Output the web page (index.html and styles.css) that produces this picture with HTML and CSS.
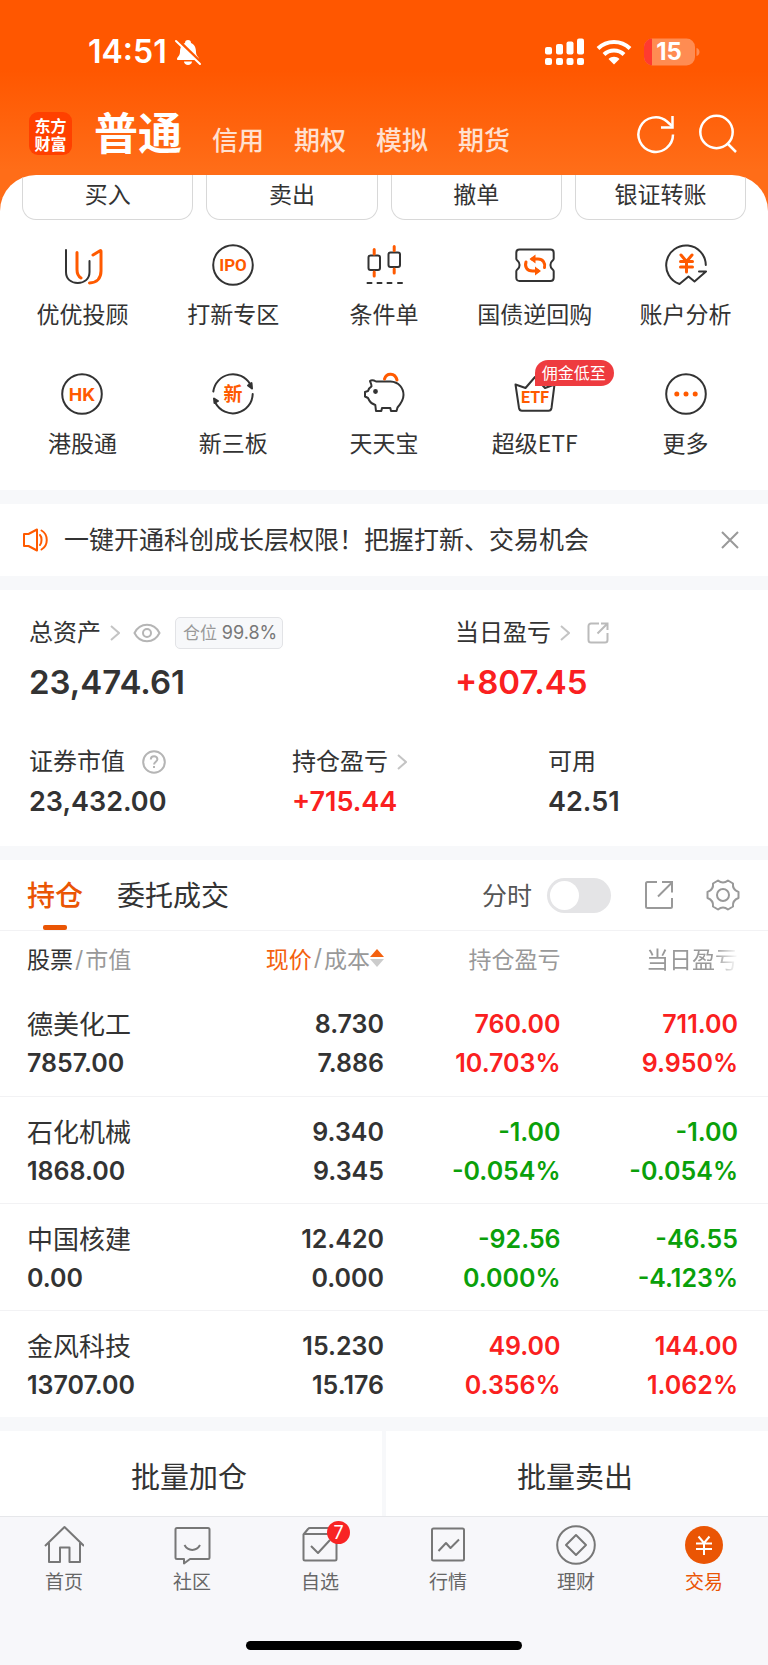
FILE: index.html
```html
<!DOCTYPE html>
<html lang="zh-CN">
<head>
<meta charset="utf-8">
<meta name="viewport" content="width=device-width, initial-scale=1">
<title>交易</title>
<link rel="stylesheet" href="styles.css">
</head>
<body>
<div class="app">
  <div class="top">
    <div class="status">
      <div class="status-group">
        <span class="clock">14:51</span>
        <svg class="bell" width="28" height="28" viewBox="0 0 28 28" aria-hidden="true">
          <path d="M3 21c0-2 3-3 3-7 0-5 2-8 5-9 0-2 1-3 3-3s3 1 3 3c3 1 5 4 5 9 0 4 3 5 3 7 0 .8-.6 1-1 1H4c-.6 0-1-.3-1-1z" fill="#fff"/>
          <path d="M10 23.500h8c0 2-2 3.500-4 3.500s-4-1.500-4-3.500z" fill="#fff"/>
          <path d="M3.500 1.500l24 23.500" stroke="#ff5800" stroke-width="3"/>
          <path d="M2 3l24 23" stroke="#fff" stroke-width="2" stroke-linecap="round"/>
        </svg>
      </div>
      <div class="status-group status-right">
        <svg width="39" height="28" viewBox="0 0 39 28" fill="#fff" aria-hidden="true">
          <rect x="0" y="9" width="7" height="7.500" rx="2"/><rect x="11" y="6" width="7" height="10.500" rx="2"/><rect x="21.500" y="3.500" width="7" height="13" rx="2"/><rect x="32" y="0.500" width="7" height="16" rx="2"/>
          <rect x="0" y="20" width="7" height="7" rx="2"/><rect x="11" y="20" width="7" height="7" rx="2"/><rect x="21.500" y="20" width="7" height="7" rx="2"/><rect x="32" y="20" width="7" height="7" rx="2"/>
        </svg>
        <svg class="wifi" width="36" height="26" viewBox="0 0 36 26" fill="none" stroke="#fff" stroke-width="4" aria-hidden="true">
          <path d="M2 9.500C11 0.800 25 0.800 34 9.500"/><path d="M8 15.500c5.500-5.400 14.500-5.400 20 0"/>
          <path d="M12.500 20c3-3 8-3 11 0L18 25.500z" fill="#fff" stroke="none"/>
        </svg>
        <svg width="57" height="28" viewBox="0 0 57 28" aria-hidden="true">
          <defs><clipPath id="cell"><rect x="0" y="0.500" width="51" height="27" rx="8.500"/></clipPath></defs>
          <g clip-path="url(#cell)"><rect width="51" height="28" fill="#ff8c52"/><rect width="8" height="28" fill="#ff3b30"/></g>
          <path d="M52.500 10c4 1 4 7 0 8z" fill="#ff8c52"/>
          <text x="25" y="22" class="battery-text">15</text>
        </svg>
      </div>
    </div>
    <header class="bar">
      <div class="logo"><span>东方</span><span>财富</span></div>
      <nav class="accounts">
        <button class="account account-on">普通</button>
        <button class="account">信用</button>
        <button class="account">期权</button>
        <button class="account">模拟</button>
        <button class="account">期货</button>
      </nav>
      <div class="bar-tools">
        <button class="icon-btn" aria-label="刷新"><svg width="40" height="40" viewBox="0 0 40 40" fill="none" stroke="#fff" stroke-width="2.500"><path d="M37 20.500A17.300 17.300 0 1 1 31 7.500L36 12"/><path d="M36.500 2v11.500H25"/></svg></button>
        <button class="icon-btn" aria-label="搜索"><svg width="40" height="40" viewBox="0 0 40 40" fill="none" stroke="#fff" stroke-width="2.500"><circle cx="18.500" cy="18" r="16.200"/><path d="M29.500 29.500l8.500 8.500"/></svg></button>
      </div>
    </header>
    <section class="sheet">
      <div class="actions">
        <button class="action">买入</button><button class="action">卖出</button><button class="action">撤单</button><button class="action">银证转账</button>
      </div>
      <div class="grid">
        <a class="tile" href="#"><svg class="tile-icon" viewBox="0 0 44 44"><path d="M6 7v22c0 7 5 11 11.700 11s11.800-4 11.800-11V18"/><path class="hot" d="M17 9.500v17c0 4 1.500 7 4 8.500M33 12l7-4.200c.7-.4 1 0 1 .7V28c0 7-4 11.800-11.500 12"/></svg><span>优优投顾</span></a>
        <a class="tile" href="#"><svg class="tile-icon" viewBox="0 0 44 44"><circle cx="22" cy="22" r="19.800"/><text x="22" y="28" class="glyph g-ipo">IPO</text></svg><span>打新专区</span></a>
        <a class="tile" href="#"><svg class="tile-icon" viewBox="0 0 44 44"><rect x="6.500" y="12.500" width="11.500" height="14.500" rx="2"/><rect x="26.500" y="9.500" width="11.500" height="14.500" rx="2"/><path class="hot" d="M12.200 6.500v4.500M12.200 29v4M32.200 3.500v4M32.200 26v4"/><path d="M5.500 40h4M15.500 40h4M25.500 40h4M36 40h4"/></svg><span>条件单</span></a>
        <a class="tile" href="#"><svg class="tile-icon" viewBox="0 0 44 44"><path d="M6.500 6.500h31c2 0 3.200 1.200 3.200 3.200v6c0 1-.5 1.300-1.300 2-2.600 2.200-2.600 6.400 0 8.600.8.700 1.300 1 1.300 2v6.500c0 2-1.200 3.200-3.200 3.200h-31c-2 0-3.200-1.200-3.200-3.200v-6.500c0-1 .5-1.300 1.300-2 2.600-2.200 2.600-6.400 0-8.600-.8-.7-1.300-1-1.300-2v-6c0-2 1.200-3.200 3.200-3.200z"/><path class="hot" d="M19 16h6c5 0 7.500 4 6.500 8.500M13 19c-1.500 5 1 9 6.500 9H25"/><path class="hot-fill" d="M16.500 16l6-4.500v9zM28 28l-6-4.500v9z"/></svg><span>国债逆回购</span></a>
        <a class="tile" href="#"><svg class="tile-icon" viewBox="0 0 44 44"><path d="M41.800 22A19.800 19.800 0 1 0 15.500 41l9-7.500 6 5 11.500-10h-7"/><path class="hot" d="M17 12l5.500 6.500L28 12M22.500 18.500V29M16.500 18.500h12M16.500 24h12"/></svg><span>账户分析</span></a>
        <a class="tile" href="#"><svg class="tile-icon" viewBox="0 0 44 44"><circle cx="22" cy="22" r="19.800"/><text x="22" y="28.500" class="glyph g-hk">HK</text></svg><span>港股通</span></a>
        <a class="tile" href="#"><svg class="tile-icon" viewBox="0 0 44 44"><path d="M2.300 19.500A19.800 19.800 0 0 1 39 12M41.700 22A19.800 19.800 0 0 1 4.500 31"/><path class="dark-fill" d="M41 16.500l-4-3 3.500-2.500zM3 26.500l.5 4.500 3.500-2z"/><text x="22" y="29" class="glyph g-new">新</text></svg><span>新三板</span></a>
        <a class="tile" href="#"><svg class="tile-icon" viewBox="0 0 44 44"><path d="M8 9c1.500-1.200 3.500-1 6 .5l14.500 0C37 10 41.500 16 41.500 23c0 5-3 9-6 12.500L34.500 39H29l-.7-3H20l-.7 3H14l-.7-6c-3-1-5-2.500-6-4.500L6 26l-3-1.500V20l3-1c.5-2 1.500-3.500 3.500-4.700C9.500 12 8.500 11 8 9z"/><circle class="dark-fill" cx="13.500" cy="19.500" r="1.400"/><path class="hot" d="M22.500 7c2-6.500 10.500-6.500 12.500 1"/></svg><span>天天宝</span></a>
        <a class="tile" href="#"><svg class="tile-icon" viewBox="0 0 44 44"><path d="M2.500 12.500l10 3.500L22 5l10 11 9.500-3.500L38.500 36c-.3 1.800-1.300 2.700-3 2.700H9c-1.800 0-2.700-1-3-2.700z"/><text x="22" y="31" class="glyph g-etf">ETF</text></svg><em class="flag">佣金低至</em><span>超级ETF</span></a>
        <a class="tile" href="#"><svg class="tile-icon" viewBox="0 0 44 44"><circle cx="22" cy="22" r="19.800"/><g class="hot-fill"><circle cx="12.800" cy="22" r="2.500"/><circle cx="22" cy="22" r="2.500"/><circle cx="31.200" cy="22" r="2.500"/></g></svg><span>更多</span></a>
      </div>
    </section>
  </div>

  <section class="notice">
    <svg width="26" height="24" viewBox="0 0 26 24" fill="none" stroke="#ff5a00" stroke-width="2" stroke-linejoin="round" aria-hidden="true"><path d="M1 6h4.500L14 1.500v21L5.500 18H1z"/><path d="M17 7c2 2 2 8 0 10M18.500 2.500c7 4 7 15 0 19" stroke-linecap="round"/></svg>
    <p class="notice-text">一键开通科创成长层权限！把握打新、交易机会</p>
    <button class="icon-btn" aria-label="关闭"><svg width="18" height="18" viewBox="0 0 18 18" stroke="#999" stroke-width="2"><path d="M1 1l16 16M17 1L1 17"/></svg></button>
  </section>

  <section class="assets">
    <div class="asset-main">
      <div>
        <div class="label">总资产
          <svg class="chev" viewBox="0 0 10 16"><path d="M1 1l8 7-8 7"/></svg>
          <button class="icon-btn eye" aria-label="隐藏金额"><svg width="28" height="20" viewBox="0 0 28 20" fill="none" stroke="#b5b5b5" stroke-width="2"><path d="M1.500 10C7-1 21-1 26.500 10 21 21 7 21 1.500 10z"/><circle cx="14" cy="10" r="4"/></svg></button>
          <span class="ratio">仓位 <b>99.8%</b></span>
        </div>
        <div class="big">23,474.61</div>
      </div>
      <div>
        <div class="label">当日盈亏
          <svg class="chev" viewBox="0 0 10 16"><path d="M1 1l8 7-8 7"/></svg>
          <button class="icon-btn share" aria-label="分享"><svg width="22" height="22" viewBox="0 0 22 22" fill="none" stroke="#bbb" stroke-width="2"><path d="M12 1.500H4A2.500 2.500 0 0 0 1.500 4v14A2.500 2.500 0 0 0 4 20.500h14a2.500 2.500 0 0 0 2.500-2.500v-7M10.500 11.500L20 2M14 1.500h6.500V8"/></svg></button>
        </div>
        <div class="big up">+807.45</div>
      </div>
    </div>
    <div class="asset-sub">
      <div>
        <div class="label">证券市值
          <svg class="help" width="24" height="24" viewBox="0 0 24 24" fill="none" stroke="#b5b5b5" stroke-width="2"><circle cx="12" cy="12" r="10.800"/><path d="M8.800 9.500c0-4.500 6.600-4.300 6.600-.2 0 2.200-3.300 2.700-3.300 5.200"/><path d="M12 16v2"/></svg>
        </div>
        <div class="mid">23,432.00</div>
      </div>
      <div>
        <div class="label">持仓盈亏
          <svg class="chev" viewBox="0 0 10 16"><path d="M1 1l8 7-8 7"/></svg>
        </div>
        <div class="mid up">+715.44</div>
      </div>
      <div>
        <div class="label">可用</div>
        <div class="mid">42.51</div>
      </div>
    </div>
  </section>

  <section class="positions">
    <div class="tabs">
      <button class="tab tab-on">持仓</button>
      <button class="tab">委托成交</button>
      <label class="switch-label" for="minute">分时</label>
      <input class="switch" type="checkbox" id="minute">
      <button class="icon-btn out" aria-label="分享持仓"><svg width="28" height="28" viewBox="0 0 28 28" fill="none" stroke="#999" stroke-width="2"><path d="M12 1H2.500C1.500 1 1 1.500 1 2.500v23c0 1 .5 1.500 1.500 1.500h23c1 0 1.500-.5 1.500-1.500V17M13 15.500L26.500 2M17 1h10v10.500"/></svg></button>
      <button class="icon-btn" aria-label="设置"><svg width="34" height="34" viewBox="0 0 34 34" fill="none" stroke="#999" stroke-width="2" stroke-linejoin="round"><circle cx="17" cy="17" r="6"/><path d="M12 2.500c3 2.500 7 2.500 10 0l5 3c-.5 4 1.500 7 5.500 8.500v6c-4 1.500-6 4.500-5.500 8.500l-5 3c-3-2.500-7-2.500-10 0l-5-3c.5-4-1.500-7-5.500-8.500v-6C5.500 12.500 7.500 9.500 7 5.500z"/></svg></button>
    </div>
    <table class="table">
      <thead>
        <tr>
          <th><b class="dark">股票</b><i>/</i>市值</th>
          <th><button class="sort"><b class="hot-text">现价</b><i>/</i>成本<svg width="14" height="20" viewBox="0 0 14 20"><path d="M7 1l7 8H0z" fill="#f4610f"/><path d="M7 19l7-8H0z" fill="#ccc"/></svg></button></th>
          <th>持仓盈亏</th>
          <th><span class="fade">当日盈亏</span></th>
        </tr>
      </thead>
      <tbody>
        <tr><td><span class="name">德美化工</span><span>7857.00</span></td><td><span>8.730</span><span>7.886</span></td><td class="up"><span>760.00</span><span>10.703%</span></td><td class="up"><span>711.00</span><span>9.950%</span></td></tr>
        <tr><td><span class="name">石化机械</span><span>1868.00</span></td><td><span>9.340</span><span>9.345</span></td><td class="down"><span>-1.00</span><span>-0.054%</span></td><td class="down"><span>-1.00</span><span>-0.054%</span></td></tr>
        <tr><td><span class="name">中国核建</span><span>0.00</span></td><td><span>12.420</span><span>0.000</span></td><td class="down"><span>-92.56</span><span>0.000%</span></td><td class="down"><span>-46.55</span><span>-4.123%</span></td></tr>
        <tr><td><span class="name">金风科技</span><span>13707.00</span></td><td><span>15.230</span><span>15.176</span></td><td class="up"><span>49.00</span><span>0.356%</span></td><td class="up"><span>144.00</span><span>1.062%</span></td></tr>
      </tbody>
    </table>
  </section>

  <div class="bulk"><button>批量加仓</button><button>批量卖出</button></div>

  <footer class="footer">
    <nav class="nav">
      <a href="#"><svg viewBox="0 0 40 40"><path d="M1 21L20.500 2 40 21M5 18v19h11V22.500h9.500V37H36V18"/></svg>首页</a>
      <a href="#"><svg viewBox="0 0 40 40"><path d="M5 3h31c1 0 1.500.5 1.500 1.500v28c0 1-.5 1.500-1.500 1.500H18l-6 4.500V34H5c-1 0-1.500-.5-1.500-1.500v-28C3.500 3.500 4 3 5 3zM12.500 20c3.500 6.500 12 6.500 15.500 0"/></svg>社区</a>
      <a href="#"><svg viewBox="0 0 40 40"><path d="M4 9h31c1 0 1.500.5 1.500 1.500V34c0 1-.5 1.500-1.500 1.500H5c-1 0-1.500-.5-1.500-1.500V9.500L8 4c.5-.7 1-1 2-1h24M11 21l7 7 12-13"/></svg><span class="count">7</span>自选</a>
      <a href="#"><svg viewBox="0 0 40 40"><rect x="4" y="3.500" width="32" height="32" rx="1.500"/><path d="M10.500 26l7.500-8 4.500 5L31 14.500"/></svg>行情</a>
      <a href="#"><svg viewBox="0 0 40 40"><circle cx="20" cy="20" r="18.800"/><path d="M20 10l10 10-10 10-10-10z"/></svg>理财</a>
      <a class="nav-on" href="#"><svg viewBox="0 0 40 40"><circle cx="20" cy="20" r="19" fill="#ea5504" stroke="none"/><path d="M14.500 11.500L20 18l5.500-6.500M20 18v12M12 18.500h16M12 24h16" stroke="#fff"/></svg>交易</a>
    </nav>
    <div class="home"></div>
  </footer>
</div>
</body>
</html>
```
FILE: styles.css
```css
* { box-sizing: border-box; }
body {
  margin: 0;
  background: #fff;
  color: #333;
  font-family: "Inter", "Noto Sans CJK SC", sans-serif;
}
button {
  margin: 0;
  padding: 0;
  border: 0;
  background: none;
  color: inherit;
  font: inherit;
}
a { color: inherit; text-decoration: none; }
svg { display: block; flex: none; }
.app { background: #f7f8fa; }
.up { color: #fa2020; }
.down { color: #0aa00a; }
.icon-btn { display: flex; flex: none; }

/* Header */
.top { background: linear-gradient(#ff5700 0, #ff5700 70px, #ff6d18 170px); }
.status {
  display: flex;
  justify-content: space-between;
  align-items: center;
  height: 104px;
  padding: 0 67px 0 88px;
}
.status-group { display: flex; align-items: center; }
.status-right { gap: 12px; }
.clock { color: #fff; font-size: 32px; font-weight: 600; line-height: 36px; }
.bell { margin-left: 7px; }
.battery-text {
  fill: #fff;
  font-family: "Inter", sans-serif;
  font-size: 24px;
  font-weight: 700;
  text-anchor: middle;
}
.bar {
  display: flex;
  align-items: center;
  height: 71px;
  padding: 0 30px 12px 29px;
}
.logo {
  display: grid;
  align-content: center;
  justify-items: center;
  width: 43px;
  height: 43px;
  border-radius: 9px;
  background: #ff4000;
  color: #fff;
  font: 700 16px/18px "Noto Sans CJK SC", sans-serif;
}
.accounts { display: flex; align-items: baseline; gap: 30px; margin: 8px 0 0 22px; }
.account { color: #ffe0d0; font-size: 26px; font-weight: 500; line-height: 56px; }
.account-on { color: #fff; font-size: 44px; font-weight: 700; }
.bar-tools { display: flex; gap: 22px; margin-left: auto; }

.sheet {
  overflow: hidden;
  padding-bottom: 33px;
  border-radius: 36px 36px 0 0;
  background: #fff;
}
.actions {
  display: grid;
  grid-template-columns: repeat(4, 1fr);
  gap: 13px;
  padding: 0 22px;
}
.action {
  height: 45px;
  padding-bottom: 8px;
  border: 1px solid #d8d8d8;
  border-top: 0;
  border-radius: 0 0 14px 14px;
  font-size: 23px;
}
.grid {
  display: grid;
  grid-template-columns: repeat(5, 1fr);
  row-gap: 44px;
  padding: 23px 7px 0;
}
.tile {
  position: relative;
  display: flex;
  flex-direction: column;
  align-items: center;
  gap: 11px;
  font: 23px/30px "Noto Sans CJK SC", sans-serif;
}
.tile-icon {
  width: 44px;
  height: 44px;
  fill: none;
  stroke: #333;
  stroke-width: 2;
  stroke-linecap: round;
  stroke-linejoin: round;
}
.hot { stroke: #ff5a00; stroke-width: 3; }
.hot-fill { fill: #ff5a00; stroke: none; }
.dark-fill { fill: #333; }
.glyph {
  fill: #ff5a00;
  stroke: none;
  font-family: "Inter", "Noto Sans CJK SC", sans-serif;
  font-weight: 700;
  text-anchor: middle;
}
.g-ipo { font-family: "Roboto", sans-serif; font-size: 17px; }
.g-hk { font-size: 18px; }
.g-new { font-size: 19px; }
.g-etf { font-family: "Roboto", sans-serif; font-size: 16px; }
.flag {
  position: absolute;
  top: -12px;
  left: 50%;
  height: 26px;
  padding: 0 8px 0 7px;
  border-radius: 13px 13px 13px 0;
  background: #ee3b3f;
  color: #fff;
  font-size: 16px;
  font-style: normal;
  line-height: 25px;
  white-space: nowrap;
}

/* Notice */
.notice {
  display: flex;
  align-items: center;
  height: 72px;
  margin: 14px 0;
  padding: 0 29px 0 23px;
  background: #fff;
}
.notice-text { flex: 1; margin: 0 0 0 15px; font-size: 25px; line-height: 36px; }

/* Assets */
.assets { padding: 27px 0 26px 29px; background: #fff; }
.asset-main { display: grid; grid-template-columns: 426fr 313fr; }
.asset-sub { display: grid; grid-template-columns: 263fr 256fr 220fr; margin-top: 44px; }
.label { display: flex; align-items: center; height: 32px; font-size: 24px; line-height: 32px; }
.chev {
  width: 10px;
  height: 16px;
  margin-left: 9px;
  fill: none;
  stroke: #c4c4c4;
  stroke-width: 2;
}
.eye { margin-left: 13px; }
.share { margin-left: 17px; }
.help { margin-left: 17px; }
.ratio {
  height: 32px;
  margin-left: 14px;
  padding: 0 5px 0 7px;
  border: 1px solid #e2e3e6;
  border-radius: 5px;
  background: #f7f8fa;
  color: #999;
  font-size: 17px;
  line-height: 30px;
}
.ratio b { color: #777; font-size: 18px; font-weight: 400; }
.big { margin-top: 13px; font-size: 33px; font-weight: 600; line-height: 40px; }
.mid { margin-top: 6px; font-size: 27px; font-weight: 600; line-height: 36px; }

/* Positions */
.positions { margin-top: 14px; background: #fff; }
.tabs {
  display: flex;
  align-items: center;
  height: 71px;
  padding: 0 28px 0 27px;
  border-bottom: 1px solid #f2f2f4;
}
.tab { position: relative; height: 70px; padding-bottom: 3px; margin-right: 34px; font-size: 28px; }
.tab-on { color: #ea5504; font-weight: 500; }
.tab-on::after {
  content: "";
  position: absolute;
  bottom: 0;
  left: 50%;
  width: 24px;
  height: 5px;
  margin-left: -12px;
  border-radius: 2px;
  background: #ea5504;
}
.switch-label { margin-left: auto; padding-bottom: 3px; color: #555; font-size: 25px; }
.switch {
  width: 64px;
  height: 35px;
  margin: 0 34px 0 15px;
  padding: 3px;
  border-radius: 18px;
  background: #e4e4e6;
  appearance: none;
}
.switch::before {
  content: "";
  display: block;
  width: 29px;
  height: 29px;
  border-radius: 50%;
  background: #fff;
}
.switch:checked { background: #ea5504; }
.switch:checked::before { margin-left: 29px; }
.out { margin-right: 33px; }

.table { width: 100%; border-collapse: collapse; table-layout: fixed; }
.table th {
  width: 23%;
  height: 58px;
  padding: 0 0 4px;
  color: #999;
  font-size: 23px;
  font-weight: 400;
  text-align: right;
}
.table th:first-child { width: 28%; padding-left: 27px; text-align: left; }
.table th:nth-child(2) { width: 22%; }
.table th:last-child { width: 27%; padding-right: 30px; }
.table th b { font-weight: 400; }
.table th i { margin: 0 2px; font-style: normal; }
.dark { color: #333; }
.hot-text { color: #f4610f; }
.sort { display: flex; align-items: center; margin-left: auto; }
.fade {
  -webkit-mask-image: linear-gradient(90deg, #000 74%, transparent);
  mask-image: linear-gradient(90deg, #000 74%, transparent);
}
.table td {
  height: 107px;
  padding: 16px 0 12px;
  font-size: 25px;
  font-weight: 600;
  line-height: 39px;
  text-align: right;
}
.table td:first-child { padding-left: 27px; text-align: left; }
.table td:last-child { padding-right: 30px; }
.table td span { display: block; }
.table td .name { font-size: 26px; font-weight: 400; }
.table tbody tr + tr { border-top: 1px solid #f2f2f4; }

/* Bulk actions and bottom navigation */
.bulk { display: grid; grid-template-columns: 1fr 1fr; gap: 4px; margin-top: 14px; }
.bulk button { height: 85px; padding: 3px 4px 0 0; background: #fff; font-size: 29px; }
.footer { padding: 8px 0 15px; border-top: 1px solid #e6e7ea; background: #f7f7fa; }
.nav { display: grid; grid-template-columns: repeat(6, 1fr); }
.nav a {
  position: relative;
  display: flex;
  flex-direction: column;
  align-items: center;
  gap: 6px;
  color: #666;
  font-size: 19px;
  line-height: 24px;
}
.nav svg { width: 40px; height: 40px; fill: none; stroke: #777; stroke-width: 2; stroke-linejoin: round; }
.nav .nav-on { color: #ea5504; }
.count {
  position: absolute;
  top: -4px;
  left: 50%;
  width: 23px;
  height: 23px;
  margin-left: 7px;
  border-radius: 50%;
  background: #f82424;
  color: #fff;
  font-size: 18px;
  line-height: 23px;
  text-align: center;
}
.home { width: 36%; height: 9px; margin: 46px auto 0; border-radius: 5px; background: #000; }
```
